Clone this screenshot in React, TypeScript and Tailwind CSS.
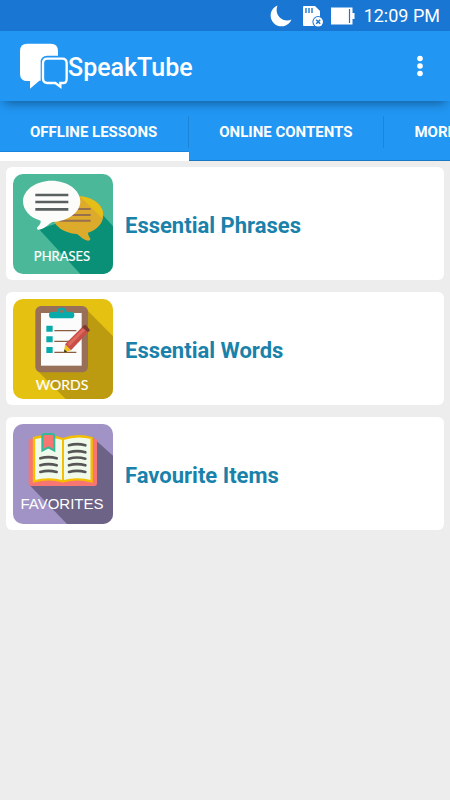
import React, { FC, useState } from "react";

interface LessonProps {
  title: string;
  icon: React.ReactNode;
}

const tabs = ["OFFLINE LESSONS", "ONLINE CONTENTS", "MORE APPS"];

const PhrasesIcon = () => (
  <svg viewBox="0 0 100 100" className="size-full" aria-hidden="true">
    <g transform="scale(0.33333)">
      <rect width="300" height="300" fill="#4bb999" />
      <path d="M78 166 L202 300 H300 V157 L256 108 Z" fill="#0a9077" />
      <path
        d="M195 67 C238 67 271 92 271 122 C271 147 252 168 225 176 C225 186 232 191 232 195 C231 202 222 201 213 196 C204 191 199 184 192 180 C151 177 118 153 118 122 C118 91 152 67 195 67 Z"
        fill="#dcab2b"
      />
      <path d="M195 67 C236 67 266 91 270 115 L267 132 L200 67 Z" fill="#e6be18" />
      <path d="M145 105 H233 M145 123 H233 M140 140 H233" stroke="#97704f" strokeWidth="6" />
      <path
        d="M116 20 C163 20 202 48 202 82 C202 116 163 143 118 144 C108 149 94 165 78 167 C69 168 71 160 77 156 C81 151 84 145 83 140 C52 132 30 109 30 82 C30 48 69 20 116 20 Z"
        fill="#fcfcfa"
      />
      <path d="M67 63 H166 M67 84 H166 M67 106 H166" stroke="#59605f" strokeWidth="8" />
    </g>
    <text
      x="49"
      y="87"
      textAnchor="middle"
      fontSize="13"
      fill="#fff"
      stroke="#fff"
      strokeWidth="0.2"
      className="font-['Lato',sans-serif]"
    >
      PHRASES
    </text>
  </svg>
);

const WordsIcon = () => (
  <svg viewBox="0 0 100 100" className="size-full" aria-hidden="true">
    <g transform="scale(0.33333)">
      <rect width="300" height="300" fill="#e5c212" />
      <path d="M72 214 L158 300 H300 V112 L219 30 Z" fill="#bd9b10" />
      <rect x="67" y="21" width="158" height="199" rx="17" fill="#98705a" />
      <rect x="84" y="42" width="122" height="158" fill="#fbfcfb" />
      <path
        d="M116 39 H132 C130 31 137 26 146 26 C155 26 162 31 160 39 H175 Q184 39 184 48 Q184 58 174 58 H118 Q108 58 108 48 Q108 39 116 39 Z"
        fill="#08abaa"
      />
      <circle cx="146" cy="37" r="5" fill="#98705a" />
      <path d="M100 80 H119 V98 H100 Z M100 112 H119 V130 H100 Z M100 144 H119 V162 H100 Z" fill="#08abaa" />
      <path d="M124 95 H190 M124 127 H190 M124 160 H190" stroke="#8b5c40" strokeWidth="4" />
      <path d="M153 161 L156 136 L174 154 Z" fill="#f1c319" />
      <path d="M153 161 L154 151 L162 158 Z" fill="#3c352d" />
      <path d="M156 136 L207 85 L225 100 L174 154 Z" fill="#c94e47" />
      <path d="M163 134 L211 88 L217 93 L169 142 Z" fill="#dc6b5e" />
      <path d="M207 85 L214 78 Q218 76 222 82 L231 94 L225 100 Z" fill="#7e3933" />
    </g>
    <text
      x="49"
      y="91"
      textAnchor="middle"
      fontSize="14"
      fill="#fff"
      stroke="#fff"
      strokeWidth="0.2"
      className="font-['Lato',sans-serif]"
    >
      WORDS
    </text>
  </svg>
);

const FavoritesIcon = () => (
  <svg viewBox="0 0 100 100" className="size-full" aria-hidden="true">
    <g transform="scale(0.33333)">
      <rect width="300" height="300" fill="#a293c6" />
      <path d="M50 184 L162 300 H300 V95 L250 50 Z" fill="#6d6387" />
      <rect x="47" y="44" width="205" height="142" rx="7" fill="#f77672" />
      <path
        d="M63 42 Q107 30 150 45 Q193 30 236 42 V172 Q193 160 150 172 Q107 160 63 172 Z"
        fill="#effaeb"
        stroke="#f4bf00"
        strokeWidth="7"
      />
      <path d="M150 44 V173" stroke="#f4bf00" strokeWidth="6" />
      <path
        d="M82 103 Q106 96 131 103 M82 124 Q106 117 131 124 M82 144 Q106 137 131 144 M168 64 Q192 57 217 64 M168 85 Q192 78 217 85 M168 104 Q192 97 217 104 M168 124 Q192 117 217 124 M168 144 Q192 137 217 144"
        fill="none"
        stroke="#575757"
        strokeWidth="8"
        strokeLinecap="round"
      />
      <path
        d="M88 80 V36 Q88 30 95 30 H117 Q124 30 124 36 V80 L106 70 Z"
        fill="#f77672"
        stroke="#32b99a"
        strokeWidth="6"
      />
    </g>
    <text
      x="49"
      y="85"
      textAnchor="middle"
      fontSize="15"
      fill="#fff"
      className="font-['Liberation_Sans',sans-serif]"
    >
      FAVORITES
    </text>
  </svg>
);

const LessonCard: FC<LessonProps> = ({ title, icon }) => {
  return (
    <li>
      <a href="#" className="flex items-center gap-3 rounded-md bg-white px-[7px] pt-[7px] pb-1.5">
        <div className="size-[100px] shrink-0 overflow-hidden rounded-[10px]">{icon}</div>
        <h2 className="pt-1 text-[22px] leading-7 font-bold text-[#1a82aa]">{title}</h2>
      </a>
    </li>
  );
};

const StatusBar = () => (
  <div className="flex h-[31px] items-center justify-end bg-[#1976d2] pr-2.5 text-white">
    <svg viewBox="0 0 22 22" className="mr-2.5 size-[22px]" fill="currentColor" aria-hidden="true">
      <path d="M7.5 0.5 A10.8 10.8 0 1 0 21.5 14.5 C14 18.5 3.5 11 7.5 0.5 Z" />
    </svg>
    <svg viewBox="0 0 22 22" className="mr-1.5 size-[22px]" aria-hidden="true">
      <path d="M2 1 H13 L18 6 V20 Q18 21 17 21 H2 Q1 21 1 20 V2 Q1 1 2 1 Z" fill="#fff" />
      <path d="M4 3 V8 M7 3 V8 M10 3 V8" stroke="#1976d2" strokeWidth="1.4" />
      <circle cx="16.2" cy="16.8" r="5.8" fill="#1976d2" />
      <circle cx="16.2" cy="16.8" r="4.8" fill="#fff" />
      <path d="M14.2 14.8 L18.2 18.8 M18.2 14.8 L14.2 18.8" stroke="#1976d2" strokeWidth="1.5" />
    </svg>
    <svg viewBox="0 0 25 18" className="mr-[9px] h-[18px] w-[25px]" aria-hidden="true">
      <path d="M1 0.5 H22.5 V6 H24.5 V12 H22.5 V17.5 H1 Z" fill="#fff" />
      <path d="M19.5 2 V16" stroke="#1976d2" strokeWidth="1.2" />
    </svg>
    <span className="text-lg leading-[31px]">12:09 PM</span>
  </div>
);

const Toolbar = () => (
  <header className="relative z-10 flex h-[70px] items-center justify-between bg-[#2196f3] pr-2.5 pl-5 text-white shadow-[0_6px_10px_-4px_rgba(0,0,0,0.4)]">
    <div className="flex items-center">
      <svg viewBox="0 0 144 138" className="h-[46px] w-12" aria-hidden="true">
        <path
          d="M22 2 H92 Q114 2 114 24 V98 Q114 113 98 113 H58 L30 137 V114 H22 Q0 114 0 92 V24 Q0 2 22 2 Z"
          fill="#fff"
        />
        <path d="M82 38 H128 Q147 38 147 56 V126 H62 V58 Q62 38 82 38 Z" fill="#2196f3" />
        <path
          d="M82 47 H127 Q140 47 140 61 V107 Q140 120 129 120 H121 V131 L106 120 H82 Q69 120 69 106 V61 Q69 47 82 47 Z"
          fill="none"
          stroke="#fff"
          strokeWidth="7"
        />
      </svg>
      <h1 className="pt-1 text-[25px] leading-8 font-medium">SpeakTube</h1>
    </div>
    <button type="button" aria-label="More options" className="flex h-10 w-10 items-center justify-center">
      <svg viewBox="0 0 6 22" className="h-[22px] w-1.5" fill="currentColor" aria-hidden="true">
        <circle cx="3" cy="3.5" r="2.8" />
        <circle cx="3" cy="11" r="2.8" />
        <circle cx="3" cy="18.5" r="2.8" />
      </svg>
    </button>
  </header>
);

export default function App() {
  const [active, setActive] = useState(0);

  return (
    <div className="min-h-screen bg-[#ededed] font-['Roboto',sans-serif]">
      <StatusBar />
      <Toolbar />

      {/* scrolling tab strip */}
      <nav className="flex h-[60px] overflow-hidden bg-[#2196f3]">
        {tabs.map((tab, i) => (
          <button
            key={tab}
            type="button"
            onClick={() => setActive(i)}
            className={`flex shrink-0 flex-col pt-[15px] ${
              i === active
                ? "border-b-9 border-white shadow-[inset_0_-1px_0_#1a85dd]"
                : "border-b border-[#1a78c2]"
            }`}
          >
            <span className="border-r border-[#1d84d6] pr-[31px] pl-[30px] text-[15px] leading-8 font-bold text-white">
              {tab}
            </span>
          </button>
        ))}
      </nav>

      {/* lesson list */}
      <ul className="flex flex-col gap-3 px-1.5 py-1.5">
        <LessonCard title="Essential Phrases" icon={<PhrasesIcon />} />
        <LessonCard title="Essential Words" icon={<WordsIcon />} />
        <LessonCard title="Favourite Items" icon={<FavoritesIcon />} />
      </ul>
    </div>
  );
}
